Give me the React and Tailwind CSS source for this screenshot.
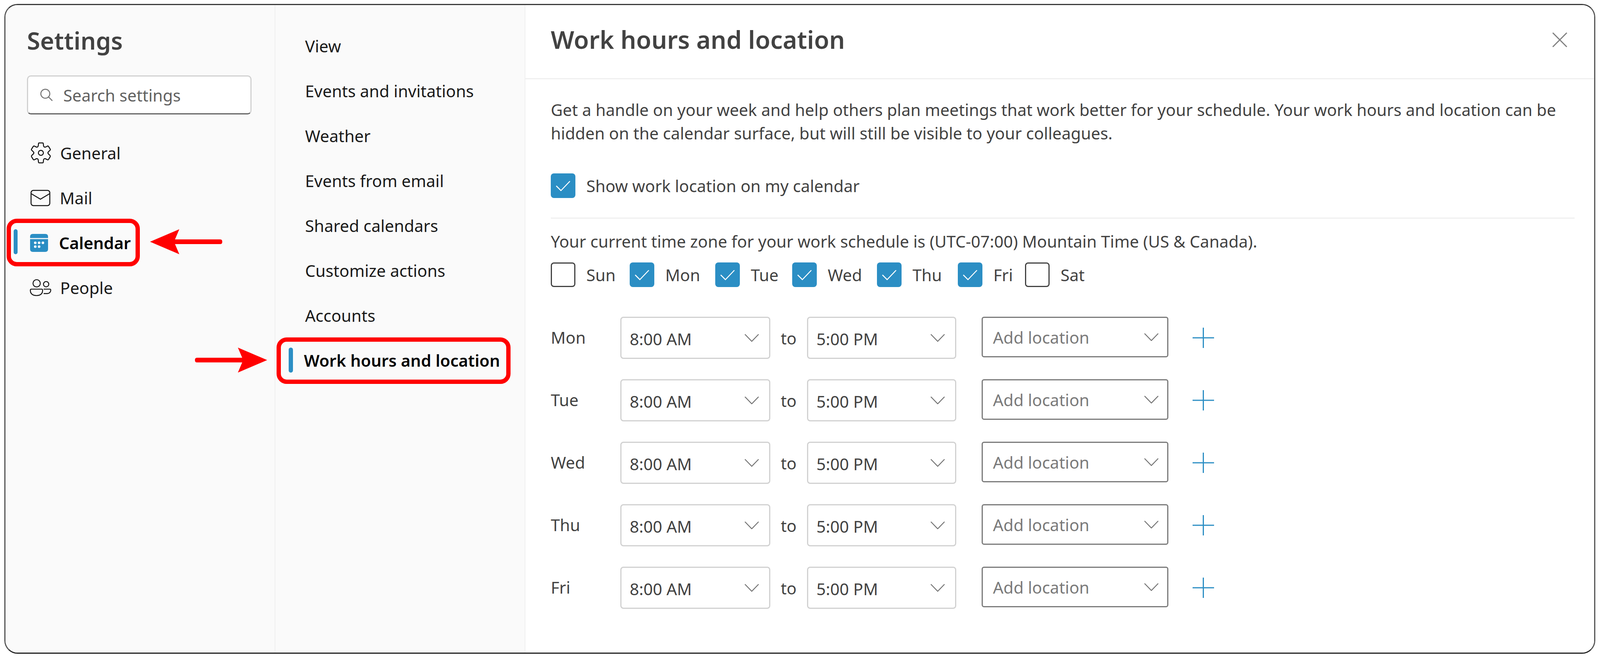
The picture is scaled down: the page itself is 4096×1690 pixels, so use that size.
const subNav = ['View', 'Events and invitations', 'Weather', 'Events from email', 'Shared calendars', 'Customize actions', 'Accounts'];
const days = [
  { name: 'Sun', checked: false, width: 'w-[202px]' },
  { name: 'Mon', checked: true, width: 'w-[219px]' },
  { name: 'Tue', checked: true, width: 'w-[197px]' },
  { name: 'Wed', checked: true, width: 'w-[217px]' },
  { name: 'Thu', checked: true, width: 'w-[207px]' },
  { name: 'Fri', checked: true, width: 'w-[172px]' },
  { name: 'Sat', checked: false, width: 'w-[160px]' },
];
const workDays = ['Mon', 'Tue', 'Wed', 'Thu', 'Fri'];

function RedArrow({ className }) {
  return (
    <svg viewBox="0 0 185 64" className={`absolute h-[64px] w-[185px] ${className}`}>
      <path d="M0 32 L75 0 L64 26 H180 Q185 26 185 32 Q185 38 180 38 H64 L75 64 Z" fill="#ff0000" />
    </svg>
  );
}

function GearIcon() {
  return (
    <svg viewBox="85 80 320 325" className="h-[55px] w-[54px] shrink-0" fill="none" stroke="#111111" strokeWidth="15">
      <path d="M208 100 Q208 92 216 92 H270 Q278 92 279 100 L283 132 Q286 158 310 155 Q325 150 340 140 Q352 134 360 146 L385 185 Q390 195 382 202 L358 225 Q342 242 358 259 L382 282 Q390 290 385 300 L360 340 Q352 352 340 345 L310 330 Q286 326 283 352 L279 385 Q278 393 270 393 H216 Q208 393 207 385 L203 352 Q200 326 176 330 L146 345 Q134 352 126 340 L101 300 Q96 290 104 282 L128 259 Q144 242 128 225 L104 202 Q96 195 101 185 L126 146 Q134 134 146 140 L176 155 Q200 158 203 132 Z" />
      <circle cx="243" cy="242" r="38" />
    </svg>
  );
}

function MailIcon() {
  return (
    <svg viewBox="0 0 51 42" className="h-[42px] w-[51px] shrink-0" fill="none" stroke="#111111" strokeWidth="2.5">
      <rect x="1.5" y="1.5" width="48" height="39" rx="6" />
      <path d="M2 10 L25.5 24 L49 10" />
    </svg>
  );
}

function CalendarIcon() {
  return (
    <svg viewBox="0 0 46 46" className="h-[46px] w-[46px] shrink-0">
      <path d="M0 10.6 V7 Q0 0 7 0 H39 Q46 0 46 7 V10.6 Z" fill="#2b8ec4" />
      <path d="M0 13.2 H46 V39 Q46 46 39 46 H7 Q0 46 0 39 Z" fill="#2b8ec4" />
      {[[13.3, 22.7], [23.1, 22.7], [32.8, 22.7], [13.3, 32.5], [23.1, 32.5]].map(([cx, cy]) => (
        <circle key={`${cx}-${cy}`} cx={cx} cy={cy} r="3.3" fill="#ffffff" />
      ))}
    </svg>
  );
}

function PeopleIcon() {
  return (
    <svg viewBox="80 815 330 260" className="h-[45px] w-[56px] shrink-0" fill="none" stroke="#111111" strokeWidth="14">
      <circle cx="185" cy="880" r="55" />
      <circle cx="328" cy="893" r="40" />
      <path d="M105 968 H262 Q275 968 275 985 Q275 1062 183 1065 Q90 1062 90 985 Q90 968 105 968 Z" />
      <path d="M290 968 H385 Q398 968 398 985 Q395 1030 345 1035 H290" />
    </svg>
  );
}

function CheckBox({ checked }) {
  if (!checked) {
    return <span className="h-[63px] w-[63px] shrink-0 rounded-[8px] border-[3px] border-[#424242] bg-white" />;
  }
  return (
    <span className="flex h-[63px] w-[63px] shrink-0 items-center justify-center rounded-[8px] bg-[#2b8ec4]">
      <svg viewBox="0 0 63 63" className="h-[63px] w-[63px]" fill="none" stroke="#ffffff" strokeWidth="2.5">
        <path d="M14 32 L26 44 L49 20" />
      </svg>
    </span>
  );
}

function Chevron() {
  return (
    <svg viewBox="0 0 37 20" className="h-[20px] w-[37px]" fill="none" stroke="#757575" strokeWidth="2.5">
      <path d="M1 1 L18.5 19 L36 1" />
    </svg>
  );
}

function TimeSelect({ value, width }) {
  return (
    <div className={`flex h-[108px] shrink-0 items-center justify-between rounded-[8px] border-[3px] border-[#d1d1d1] bg-white pl-[21px] pr-[26px] pt-[5px] ${width}`}>
      <span>{value}</span>
      <span className="-mt-[5px]"><Chevron /></span>
    </div>
  );
}

export default function App() {
  return (
    <div className="h-[1690px] w-[4096px] bg-white pb-[16px] pl-[11px] pr-[12px] pt-[10px] font-['Noto_Sans',sans-serif] text-[42px] text-[#424242]">
      <div className="flex h-full overflow-hidden rounded-[34px] border-[3px] border-[#555555] border-b-[#222222] border-t-[#3a3a3a]">
        {/* first column */}
        <aside className="w-[691px] shrink-0 border-r-[2px] border-[#f0f0f0] bg-[#fafafa] pt-[50px]">
          <h1 className="mb-[50px] h-[80px] pl-[55px] text-[61.5px] font-semibold leading-[80px]">Settings</h1>
          <div className="ml-[55px] flex h-[100px] w-[575px] items-center gap-[27px] rounded-[10px] border-[3px] border-[#d1d1d1] border-b-[#616161] bg-white pl-[31px] text-[#616161]">
            <svg viewBox="0 0 32 32" className="h-[32px] w-[32px]" fill="none" stroke="#757575" strokeWidth="2.5">
              <circle cx="13" cy="13" r="11.5" />
              <path d="M21 21 L31 31" />
            </svg>
            <span>Search settings</span>
          </div>
          <nav className="mt-[41px] text-[#1a1a1a]">
            <div className="flex h-[115px] items-center gap-[22px] pl-[64px]">
              <GearIcon />
              <span>General</span>
            </div>
            <div className="flex h-[115px] items-center gap-[24px] pl-[64px]">
              <MailIcon />
              <span>Mail</span>
            </div>
            <div className="relative flex h-[115px] items-center gap-[28px] pl-[63px] font-semibold text-black">
              <span className="absolute left-[21px] top-[23px] h-[64px] w-[10px] rounded-full bg-[#2b8ec4]" />
              <CalendarIcon />
              <span>Calendar</span>
              <span className="absolute -bottom-[3px] left-[3px] -top-[4px] w-[341px] rounded-[26px] border-[11px] border-[#ff0000]" />
              <RedArrow className="left-[370px] top-[23px]" />
            </div>
            <div className="flex h-[115px] items-center gap-[22px] pl-[62px]">
              <PeopleIcon />
              <span>People</span>
            </div>
          </nav>
        </aside>

        {/* second column */}
        <aside className="w-[640px] shrink-0 border-r-[2px] border-[#f0f0f0] bg-[#fafafa] pt-[47px] text-[#1a1a1a]">
          {subNav.map((item) => (
            <div key={item} className="flex h-[115px] items-center pl-[76px]">{item}</div>
          ))}
          <div className="relative flex h-[115px] items-center pl-[73px] font-semibold text-black">
            <span className="absolute left-[34px] top-[25px] h-[64px] w-[11px] rounded-full bg-[#2b8ec4]" />
            <span>Work hours and location</span>
            <span className="absolute -bottom-[3px] -top-[1px] left-[3px] w-[599px] rounded-[26px] border-[11px] border-[#ff0000]" />
            <RedArrow className="-left-[206px] top-[25px] rotate-180" />
          </div>
        </aside>

        {/* main pane */}
        <main className="min-w-0 flex-1 bg-white">
          <header className="flex h-[190px] items-center justify-between border-b-[3px] border-[#f0f0f0] pb-[10px] pl-[65px] pr-[69px]">
            <h2 className="text-[63px] font-semibold">Work hours and location</h2>
            <svg viewBox="0 0 38 38" className="h-[38px] w-[38px]" fill="none" stroke="#808080" strokeWidth="3">
              <path d="M1 1 L37 37 M37 1 L1 37" />
            </svg>
          </header>
          <section className="pl-[65px] pr-[50px] pt-[48px]">
            <p className="whitespace-nowrap leading-[60px]">
              Get a handle on your week and help others plan meetings that work better for your schedule. Your work hours and location can be
              <br />
              hidden on the calendar surface, but will still be visible to your colleagues.
            </p>
            <div className="mt-[73px] flex items-center gap-[28px]">
              <CheckBox checked />
              <span>Show work location on my calendar</span>
            </div>
            <div className="mt-[50px] h-[3px] bg-[#f0f0f0]" />
            <p className="mt-[28px] leading-[60px]">Your current time zone for your work schedule is (UTC-07:00) Mountain Time (US &amp; Canada).</p>
            <div className="mt-[24px] flex">
              {days.map((day) => (
                <div key={day.name} className={`flex items-center gap-[28px] ${day.width}`}>
                  <CheckBox checked={day.checked} />
                  <span>{day.name}</span>
                </div>
              ))}
            </div>
            <div className="mt-[76px] flex flex-col gap-[52px]">
              {workDays.map((day) => (
                <div key={day} className="flex h-[108px] items-center">
                  <span className="w-[178px] shrink-0 pb-[3px]">{day}</span>
                  <TimeSelect value="8:00 AM" width="w-[384px]" />
                  <span className="w-[94px] shrink-0 text-center">to</span>
                  <TimeSelect value="5:00 PM" width="w-[382px]" />
                  <div className="ml-[65px] flex h-[104px] w-[478px] shrink-0 items-center justify-between self-start rounded-[6px] border-[3px] border-[#7a7a7a] bg-white pl-[26px] pr-[22px] text-[#7a7a7a]">
                    <span>Add location</span>
                    <Chevron />
                  </div>
                  <svg viewBox="0 0 55 52" className="ml-[62px] h-[52px] w-[55px] shrink-0" fill="none" stroke="#2b8ec4" strokeWidth="3">
                    <path d="M27.5 0 V52 M0 26 H55" />
                  </svg>
                </div>
              ))}
            </div>
          </section>
        </main>
      </div>
    </div>
  );
}
